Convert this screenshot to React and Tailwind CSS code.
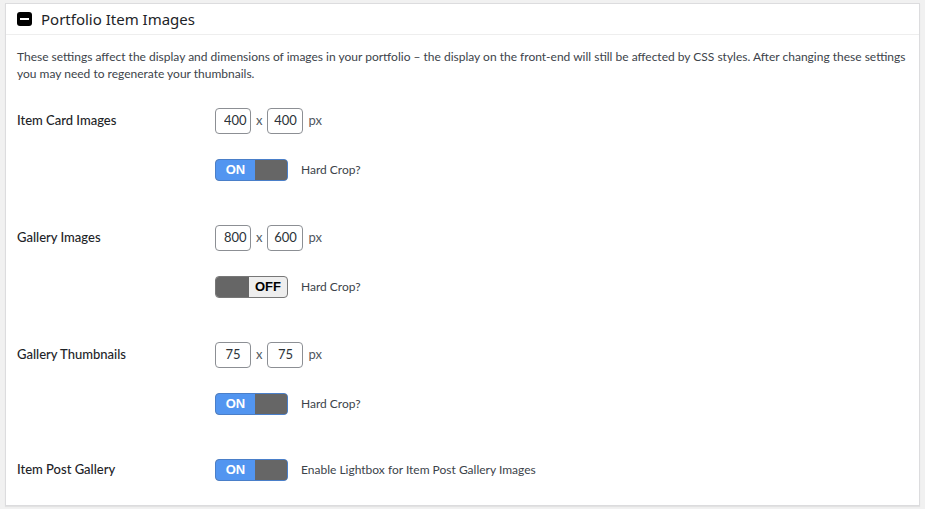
import React from "react";

const font = { fontFamily: '"Noto Sans", "Open Sans", sans-serif' };
const small = { fontFamily: 'Lato, "Noto Sans", sans-serif' };

function NumInput({ value, first }) {
  return (
    <div className={"w-[36px] h-[26px] border border-[#8c8f94] rounded-[4px] bg-white flex items-center overflow-hidden text-[13px] text-[#2c3338] " + (first ? "pl-[8px] pr-[3px]" : "justify-center")}>
      <span className="whitespace-nowrap overflow-hidden">{value}</span>
    </div>
  );
}

function Toggle({ on }) {
  if (on) {
    return (
      <div className="w-[73px] h-[22px] rounded-[4px] border border-[#4a7fc9] bg-[#666] flex overflow-hidden" style={{ fontFamily: '"Liberation Sans", Arial, sans-serif' }}>
        <div className="w-[39px] bg-[#5295f0] flex items-center justify-center text-white font-bold text-[13px]">ON</div>
        <div className="flex-1 bg-[#666]"></div>
      </div>
    );
  }
  return (
    <div className="w-[73px] h-[22px] rounded-[4px] border border-[#777] bg-[#eee] flex overflow-hidden" style={{ fontFamily: '"Liberation Sans", Arial, sans-serif' }}>
      <div className="w-[33px] bg-[#666]"></div>
      <div className="flex-1 flex items-center justify-center text-black font-bold text-[13px]">OFF</div>
    </div>
  );
}

function DimRow({ label, w, h, on, clip }) {
  return (
    <div className="flex">
      <div className="w-[198px] h-[26px] flex items-center text-[13px] font-medium text-[#1d2327]" style={small}>{label}</div>
      <div className="flex flex-col">
        <div className="flex items-center h-[26px] text-[13px] text-[#50575e]" style={small}>
          <NumInput value={w} first={clip} />
          <span className="mx-[5px]">x</span>
          <NumInput value={h} />
          <span className="ml-[5px]">px</span>
        </div>
        <div className="flex items-center mt-[25px]">
          <Toggle on={on} />
          <span className="ml-[13px] text-[12px] text-[#3c434a]" style={small}>Hard Crop?</span>
        </div>
      </div>
    </div>
  );
}

export default function App() {
  return (
    <div className="w-[925px] h-[509px] bg-[#f1f1f1] pt-[3px] pl-[5px]" style={font}>
      <div className="w-[915px] h-[503px] bg-white border border-[#dcdcde] shadow-[0_1px_1px_rgba(0,0,0,0.06)]">
        <div className="h-[31px] border-b border-[#eee] flex items-center pl-[11px]">
          <div className="w-[15px] h-[14px] bg-black rounded-[3px] flex items-center justify-center">
            <div className="w-[9px] h-[2px] bg-white"></div>
          </div>
          <span className="ml-[9px] text-[15px] text-[#1d2327]">Portfolio Item Images</span>
        </div>
        <div className="px-[11px] pt-[13px]">
          <p className="text-[12px] leading-[17px] text-[#3c434a]" style={small}>
            These settings affect the display and dimensions of images in your portfolio – the display on the front-end will still be affected by CSS styles. After changing these settings you may need to regenerate your thumbnails.
          </p>
          <div className="mt-[26px] flex flex-col gap-[44px]">
            <DimRow label="Item Card Images" w="400" h="400" on={true} clip />
            <DimRow label="Gallery Images" w="800" h="600" on={false} clip />
            <DimRow label="Gallery Thumbnails" w="75" h="75" on={true} />
            <div className="flex items-center">
              <div className="w-[198px] text-[13px] font-medium text-[#1d2327]" style={small}>Item Post Gallery</div>
              <Toggle on={true} />
              <span className="ml-[13px] text-[12px] text-[#3c434a]" style={small}>Enable Lightbox for Item Post Gallery Images</span>
            </div>
          </div>
        </div>
      </div>
    </div>
  );
}
